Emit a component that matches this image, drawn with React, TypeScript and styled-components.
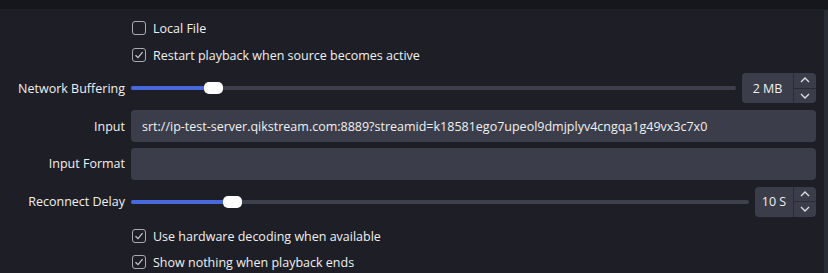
import React from "react";
import styled, { createGlobalStyle } from "styled-components";

const Global = createGlobalStyle`
  html, body { margin: 0; padding: 0; background: #1e1f26; }
  body { font-family: "Open Sans", "Noto Sans", sans-serif; font-size: 12.5px; color: #f0f0f0; }
`;

const Page = styled.div`
  width: 828px;
  height: 273px;
  overflow: hidden;
  background: #1e1f26;
  display: flex;
  flex-direction: column;
`;

const TopStrip = styled.div`
  height: 9px;
  background: #16171c;
  flex: none;
`;

const Body = styled.div`
  flex: 1;
  display: flex;
  min-height: 0;
`;

const Form = styled.div`
  flex: 1;
  display: grid;
  grid-template-columns: 125px 1fr;
  grid-template-rows: 28px 26px 40px 36px 39px 37px 32px 20px;
  column-gap: 6px;
  padding: 5px 8px 0 0;
  align-items: center;
`;

const Scrollbar = styled.div`
  width: 4px;
  margin-top: 1px;
  background: #2a2c35;
  border-radius: 2px 0 0 0;
`;

const Label = styled.div`
  text-align: right;
  white-space: nowrap;
`;

const Field = styled.div`
  display: flex;
  align-items: center;
  gap: 6px;
  min-width: 0;
`;

const CheckRow = styled.label`
  display: flex;
  align-items: center;
  gap: 7px;
  white-space: nowrap;
  grid-column: 2;
  margin-left: 1px;
`;

const Box = styled.span`
  width: 12px;
  height: 12px;
  border: 1px solid #a9abb3;
  border-radius: 3px;
  display: flex;
  align-items: center;
  justify-content: center;
  flex: none;
`;

const TextBox = styled.div`
  flex: 1;
  height: 32px;
  background: #3b3e4a;
  border-radius: 4px;
  display: flex;
  align-items: center;
  padding: 0 11px;
  box-sizing: border-box;
  white-space: nowrap;
  overflow: hidden;
`;

const Track = styled.div`
  flex: 1;
  position: relative;
  height: 4px;
  background: #3e414d;
  border-radius: 2px;
`;

const Fill = styled.div`
  position: absolute;
  left: 0;
  top: 0;
  bottom: 0;
  background: #4769dc;
  border-radius: 2px;
`;

const Handle = styled.div`
  position: absolute;
  top: -4px;
  width: 19px;
  height: 12px;
  background: #ffffff;
  border-radius: 5px;
`;

const Spin = styled.div<{ $w: number }>`
  width: ${(p) => p.$w}px;
  height: 30px;
  background: #3b3e4a;
  border-radius: 4px;
  display: flex;
  flex: none;
`;

const SpinValue = styled.div`
  flex: 1;
  display: flex;
  align-items: center;
  justify-content: center;
`;

const SpinButtons = styled.div`
  width: 22px;
  border-left: 1px solid #2b2d36;
  display: flex;
  flex-direction: column;
`;

const SpinBtn = styled.div<{ $top?: boolean }>`
  flex: 1;
  display: flex;
  align-items: center;
  justify-content: center;
  border-bottom: ${(p) => (p.$top ? "1px solid #2b2d36" : "none")};
`;

const Check = () => (
  <svg width="10" height="10" viewBox="0 0 10 10">
    <path d="M1.5 5.2 L4 7.6 L8.6 2.2" fill="none" stroke="#c4c6cc" strokeWidth="1.3" />
  </svg>
);

const Chevron = ({ up }: { up?: boolean }) => (
  <svg width="10" height="6" viewBox="0 0 10 6">
    <path
      d={up ? "M1 5 L5 1 L9 5" : "M1 1 L5 5 L9 1"}
      fill="none"
      stroke="#e0e0e4"
      strokeWidth="1.3"
    />
  </svg>
);

const CheckBox = ({ checked, text }: { checked?: boolean; text: string }) => (
  <CheckRow>
    <Box>{checked && <Check />}</Box>
    <span>{text}</span>
  </CheckRow>
);

const Slider = ({ pos }: { pos: number }) => (
  <Track>
    <Fill style={{ width: pos }} />
    <Handle style={{ left: pos - 2 }} />
  </Track>
);

const SpinBox = ({ value, w }: { value: string; w: number }) => (
  <Spin $w={w}>
    <SpinValue>{value}</SpinValue>
    <SpinButtons>
      <SpinBtn $top>
        <Chevron up />
      </SpinBtn>
      <SpinBtn>
        <Chevron />
      </SpinBtn>
    </SpinButtons>
  </Spin>
);

export default function App() {
  return (
    <Page>
      <Global />
      <TopStrip />
      <Body>
        <Form>
          <CheckBox text="Local File" />
          <CheckBox checked text="Restart playback when source becomes active" />

          <Label>Network Buffering</Label>
          <Field>
            <Slider pos={75} />
            <SpinBox value="2 MB" w={74} />
          </Field>

          <Label>Input</Label>
          <Field>
            <TextBox>srt://ip-test-server.qikstream.com:8889?streamid=k18581ego7upeol9dmjplyv4cngqa1g49vx3c7x0</TextBox>
          </Field>

          <Label>Input Format</Label>
          <Field>
            <TextBox />
          </Field>

          <Label>Reconnect Delay</Label>
          <Field>
            <Slider pos={94} />
            <SpinBox value="10 S" w={61} />
          </Field>

          <CheckBox checked text="Use hardware decoding when available" />
          <CheckBox checked text="Show nothing when playback ends" />
        </Form>
        <Scrollbar />
      </Body>
    </Page>
  );
}
